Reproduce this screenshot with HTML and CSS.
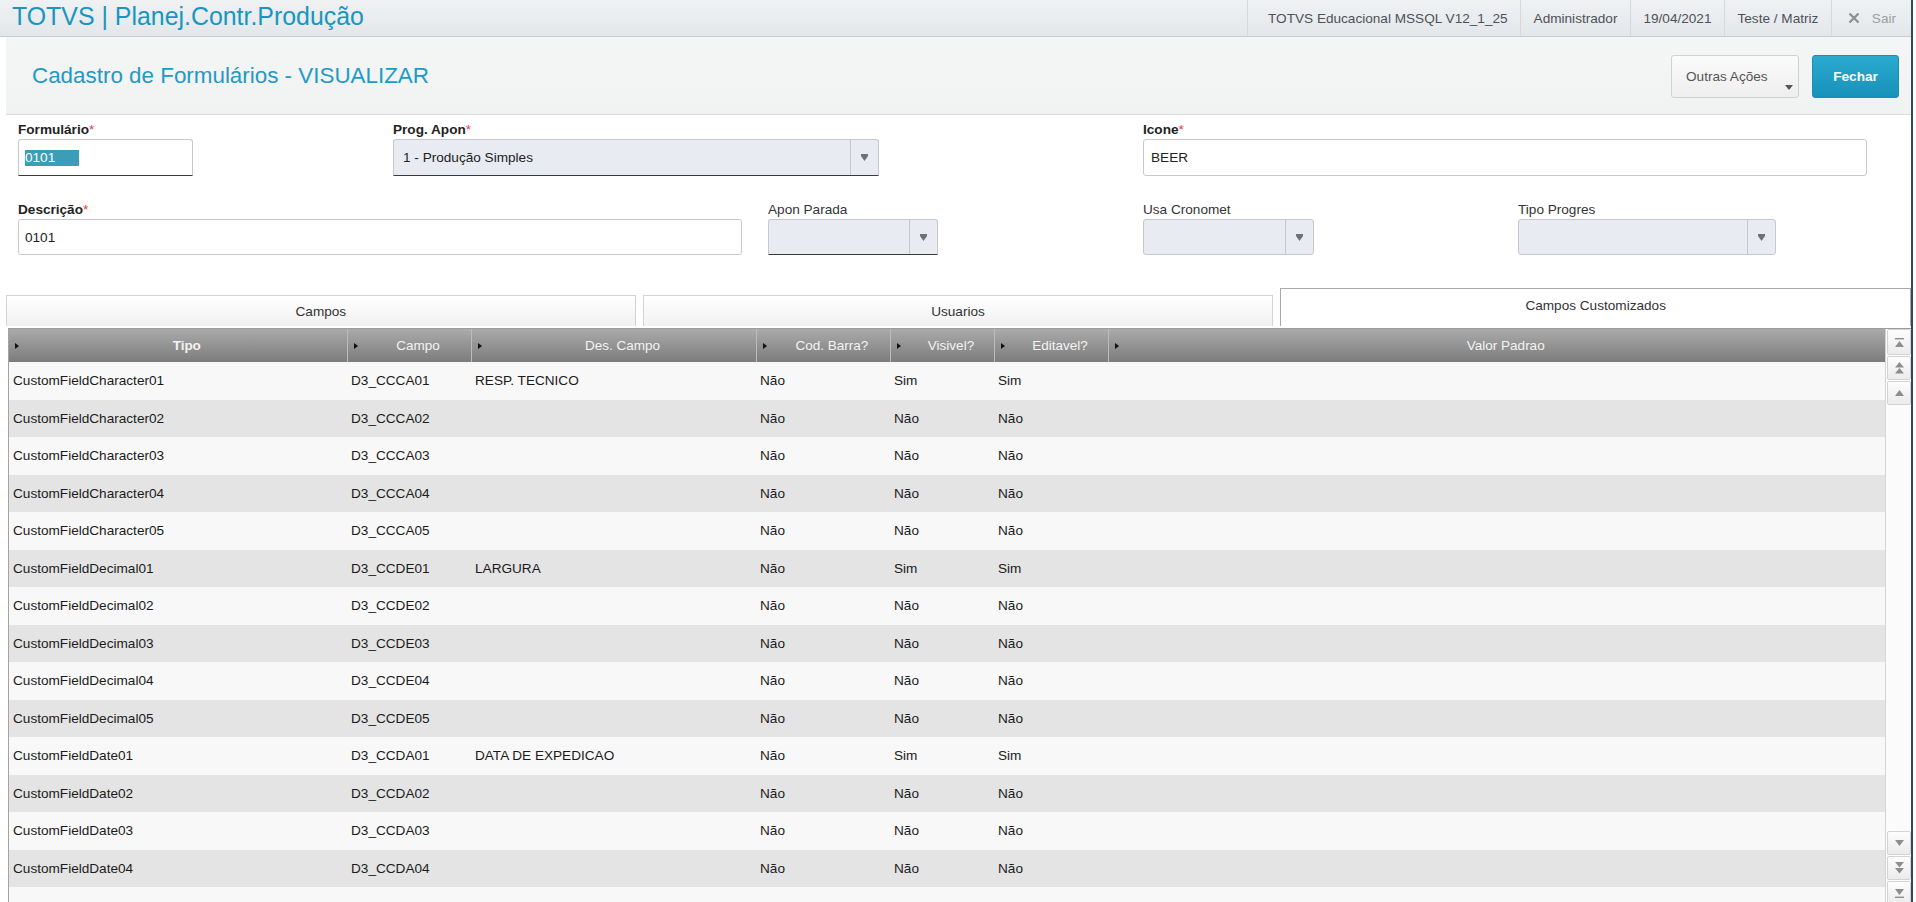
FILE: index.html
```html
<!DOCTYPE html>
<html lang="pt-BR">
<head>
<meta charset="utf-8">
<title>TOTVS | Planej.Contr.Produção</title>
<link rel="stylesheet" href="styles.css">
</head>
<body>
<div class="page">
  <div class="topbar">
    <div class="brand">TOTVS | Planej.Contr.Produção</div>
    <div class="topinfo">
      <span class="ti">TOTVS Educacional MSSQL V12_1_25</span>
      <span class="ti">Administrador</span>
      <span class="ti">19/04/2021</span>
      <span class="ti">Teste / Matriz</span>
      <span class="ti sair"><svg class="x-icon" width="12" height="12" viewBox="0 0 12 12"><path d="M1.5 1.5L10.5 10.5M10.5 1.5L1.5 10.5" stroke="#8a8d91" stroke-width="2.2" fill="none"/></svg>Sair</span>
    </div>
  </div>

  <div class="main">
    <div class="header">
      <h1 class="heading">Cadastro de Formulários - VISUALIZAR</h1>
      <div class="actions">
        <button class="btn btn-other">Outras Ações<svg class="btn-caret" width="8" height="5" viewBox="0 0 8 5"><polygon points="0,0 8,0 4,5" fill="#555"/></svg></button>
        <button class="btn btn-close">Fechar</button>
      </div>
    </div>

    <div class="form">
      <div class="field f-formulario">
        <label class="lbl req">Formulário<span class="ast">*</span></label>
        <div class="box dark-bottom"><span class="sel">0101</span></div>
      </div>
      <div class="field f-prog">
        <label class="lbl req">Prog. Apon<span class="ast">*</span></label>
        <div class="box select dark-bottom"><span class="val">1 - Produção Simples</span><span class="arrow"><svg width="7" height="7" viewBox="0 0 7 7"><polygon points="0,0 7,0 7,2 3.5,7 0,2" fill="#6e7277"/></svg></span></div>
      </div>
      <div class="field f-icone">
        <label class="lbl req">Icone<span class="ast">*</span></label>
        <div class="box"><span class="val">BEER</span></div>
      </div>

      <div class="field f-desc">
        <label class="lbl req">Descrição<span class="ast">*</span></label>
        <div class="box"><span class="val">0101</span></div>
      </div>
      <div class="field f-apon">
        <label class="lbl">Apon Parada</label>
        <div class="box select dark-bottom"><span class="val"></span><span class="arrow"><svg width="7" height="7" viewBox="0 0 7 7"><polygon points="0,0 7,0 7,2 3.5,7 0,2" fill="#6e7277"/></svg></span></div>
      </div>
      <div class="field f-usa">
        <label class="lbl">Usa Cronomet</label>
        <div class="box select"><span class="val"></span><span class="arrow"><svg width="7" height="7" viewBox="0 0 7 7"><polygon points="0,0 7,0 7,2 3.5,7 0,2" fill="#6e7277"/></svg></span></div>
      </div>
      <div class="field f-tipo">
        <label class="lbl">Tipo Progres</label>
        <div class="box select"><span class="val"></span><span class="arrow"><svg width="7" height="7" viewBox="0 0 7 7"><polygon points="0,0 7,0 7,2 3.5,7 0,2" fill="#6e7277"/></svg></span></div>
      </div>
    </div>

    <div class="tabs">
      <div class="tab t1">Campos</div>
      <div class="tab t2">Usuarios</div>
      <div class="tab t3 active">Campos Customizados</div>
    </div>

    <div class="grid">
      <div class="table-wrap">
        <table class="tbl">
          <colgroup>
            <col class="c1"><col class="c2"><col class="c3"><col class="c4"><col class="c5"><col class="c6"><col class="c7">
          </colgroup>
          <thead>
            <tr>
              <th class="sorted"><span class="tri"></span>Tipo</th>
              <th><span class="tri"></span>Campo</th>
              <th><span class="tri"></span>Des. Campo</th>
              <th><span class="tri"></span>Cod. Barra?</th>
              <th><span class="tri"></span>Visivel?</th>
              <th><span class="tri"></span>Editavel?</th>
              <th><span class="tri"></span>Valor Padrao</th>
            </tr>
          </thead>
          <tbody>
            <tr><td>CustomFieldCharacter01</td><td>D3_CCCA01</td><td>RESP. TECNICO</td><td>Não</td><td>Sim</td><td>Sim</td><td></td></tr>
            <tr><td>CustomFieldCharacter02</td><td>D3_CCCA02</td><td></td><td>Não</td><td>Não</td><td>Não</td><td></td></tr>
            <tr><td>CustomFieldCharacter03</td><td>D3_CCCA03</td><td></td><td>Não</td><td>Não</td><td>Não</td><td></td></tr>
            <tr><td>CustomFieldCharacter04</td><td>D3_CCCA04</td><td></td><td>Não</td><td>Não</td><td>Não</td><td></td></tr>
            <tr><td>CustomFieldCharacter05</td><td>D3_CCCA05</td><td></td><td>Não</td><td>Não</td><td>Não</td><td></td></tr>
            <tr><td>CustomFieldDecimal01</td><td>D3_CCDE01</td><td>LARGURA</td><td>Não</td><td>Sim</td><td>Sim</td><td></td></tr>
            <tr><td>CustomFieldDecimal02</td><td>D3_CCDE02</td><td></td><td>Não</td><td>Não</td><td>Não</td><td></td></tr>
            <tr><td>CustomFieldDecimal03</td><td>D3_CCDE03</td><td></td><td>Não</td><td>Não</td><td>Não</td><td></td></tr>
            <tr><td>CustomFieldDecimal04</td><td>D3_CCDE04</td><td></td><td>Não</td><td>Não</td><td>Não</td><td></td></tr>
            <tr><td>CustomFieldDecimal05</td><td>D3_CCDE05</td><td></td><td>Não</td><td>Não</td><td>Não</td><td></td></tr>
            <tr><td>CustomFieldDate01</td><td>D3_CCDA01</td><td>DATA DE EXPEDICAO</td><td>Não</td><td>Sim</td><td>Sim</td><td></td></tr>
            <tr><td>CustomFieldDate02</td><td>D3_CCDA02</td><td></td><td>Não</td><td>Não</td><td>Não</td><td></td></tr>
            <tr><td>CustomFieldDate03</td><td>D3_CCDA03</td><td></td><td>Não</td><td>Não</td><td>Não</td><td></td></tr>
            <tr><td>CustomFieldDate04</td><td>D3_CCDA04</td><td></td><td>Não</td><td>Não</td><td>Não</td><td></td></tr>
            <tr><td></td><td></td><td></td><td></td><td></td><td></td><td></td></tr>
          </tbody>
        </table>
      </div>
      <div class="scrollbar">
        <div class="sb-group">
          <div class="sb-btn b1"><svg width="9" height="9" viewBox="0 0 9 9"><rect x="0" y="0" width="9" height="1.4" fill="#8d8d8d"/><polygon points="4.5,3 9,9 0,9" fill="#8d8d8d"/></svg></div>
          <div class="sb-btn b2"><svg width="9" height="12" viewBox="0 0 9 12"><polygon points="4.5,0 9,5.5 0,5.5" fill="#8d8d8d"/><polygon points="4.5,6 9,11.5 0,11.5" fill="#8d8d8d"/></svg></div>
          <div class="sb-btn b3"><svg width="9" height="6" viewBox="0 0 9 6"><polygon points="4.5,0 9,6 0,6" fill="#8d8d8d"/></svg></div>
        </div>
        <div class="sb-group">
          <div class="sb-btn b3"><svg width="9" height="6" viewBox="0 0 9 6"><polygon points="0,0 9,0 4.5,6" fill="#8d8d8d"/></svg></div>
          <div class="sb-btn b2"><svg width="9" height="12" viewBox="0 0 9 12"><polygon points="0,0 9,0 4.5,5.5" fill="#8d8d8d"/><polygon points="0,6 9,6 4.5,11.5" fill="#8d8d8d"/></svg></div>
          <div class="sb-btn b1"><svg width="9" height="9" viewBox="0 0 9 9"><polygon points="0,0 9,0 4.5,6" fill="#8d8d8d"/><rect x="0" y="7.6" width="9" height="1.4" fill="#8d8d8d"/></svg></div>
        </div>
      </div>
    </div>
  </div>
</div>
</body>
</html>
```

FILE: styles.css
```css
html, body {
  margin: 0;
  padding: 0;
  background: #ffffff;
}

body {
  font-family: "Liberation Sans", Arial, sans-serif;
  font-size: 13.6px;
  color: #222;
  width: 1916px;
  height: 902px;
  overflow: hidden;
}

.page {
  width: 1911px;
  height: 902px;
  border-right: 2px solid #2b4b5d;
  overflow: hidden;
}

/* ---------- top bar ---------- */
.topbar {
  height: 36px;
  border-bottom: 1px solid #c8cbcf;
  background: linear-gradient(#eff1f3, #e4e7ea);
  display: flex;
  justify-content: space-between;
  align-items: stretch;
}

.brand {
  padding-left: 12px;
  font-size: 24.9px;
  line-height: 33px;
  color: #1896c1;
  white-space: nowrap;
}

.topinfo {
  display: flex;
  align-items: stretch;
  padding-right: 15px;
}

.ti {
  display: flex;
  align-items: center;
  padding: 0 12.5px;
  border-left: 1px solid #d6d9dc;
  color: #4d5257;
  white-space: nowrap;
}

.ti:first-child {
  padding-left: 20px;
}

.sair {
  color: #9b9ea2;
  gap: 12px;
  padding-left: 16px;
  padding-right: 0;
}

/* ---------- main ---------- */
.main {
  padding-left: 6px;
}

.header {
  height: 77px;
  border-bottom: 1px solid #dadcdd;
  background: linear-gradient(#f4f5f5, #f1f2f2);
  display: flex;
  align-items: center;
  justify-content: space-between;
  padding: 0 12px 0 26px;
}

.heading {
  margin: 0;
  font-weight: normal;
  font-size: 22.4px;
  color: #1f9ac6;
  white-space: nowrap;
}

.actions {
  display: flex;
  gap: 13px;
  margin-top: 1px;
}

.btn {
  height: 43px;
  font-family: "Liberation Sans", Arial, sans-serif;
  font-size: 13.6px;
  border-radius: 3px;
  cursor: pointer;
  white-space: nowrap;
}

.btn-other {
  position: relative;
  box-sizing: border-box;
  width: 128px;
  padding: 0 0 0 14px;
  text-align: left;
  color: #555;
  background: linear-gradient(#fbfbfb, #eeeeee);
  border: 1px solid #cfd1d3;
}

.btn-caret {
  position: absolute;
  right: 5px;
  bottom: 7px;
}

.btn-close {
  width: 87px;
  color: #ffffff;
  font-weight: bold;
  background: linear-gradient(#2ba9cf, #1792ba);
  border: 1px solid #1a8db3;
}

/* ---------- form ---------- */
.form {
  display: grid;
  grid-template-columns: repeat(5, 375px);
  row-gap: 26px;
  padding: 7px 0 0 12px;
}

.lbl {
  display: block;
  height: 16px;
  line-height: 16px;
  margin-bottom: 1px;
  color: #333;
  white-space: nowrap;
}

.lbl.req {
  font-weight: bold;
  color: #222;
}

.ast {
  color: #e23b3b;
  font-weight: normal;
}

.box {
  box-sizing: border-box;
  height: 37px;
  border: 1px solid #c8c9cb;
  border-radius: 3px;
  background: #ffffff;
  display: flex;
  align-items: center;
  padding-left: 6px;
  color: #222;
}

.f-desc .box,
.f-apon .box,
.f-usa .box,
.f-tipo .box {
  height: 36px;
}

.box .val {
  flex: 1;
  white-space: nowrap;
}

.f-icone .box .val {
  padding-left: 1px;
}

.f-prog .box .val {
  padding-left: 3px;
}

.dark-bottom {
  border-bottom: 1px solid #3a3a3a;
  border-bottom-left-radius: 0;
  border-bottom-right-radius: 0;
}

.sel {
  background: #3b9db6;
  color: #ffffff;
  line-height: 16px;
  padding-right: 24px;
}

.select {
  background: #e8ebf2;
  border-color: #c5c8cd;
  padding-right: 0;
}

.select.dark-bottom {
  border-bottom-color: #3a3a3a;
}

.arrow {
  align-self: stretch;
  width: 27px;
  border-left: 1px solid #c5c8cd;
  display: flex;
  align-items: center;
  justify-content: center;
}

.f-formulario { grid-column: 1; width: 175px; }
.f-prog { grid-column: 2 / 4; width: 486px; }
.f-icone { grid-column: 4 / 6; width: 724px; }
.f-desc { grid-column: 1 / 3; width: 724px; }
.f-apon { grid-column: 3; width: 170px; }
.f-usa { grid-column: 4; width: 171px; }
.f-tipo { grid-column: 5; width: 258px; }

/* ---------- tabs ---------- */
.tabs {
  display: flex;
  align-items: flex-end;
  gap: 7.5px;
  height: 38px;
  margin-top: 33px;
}

.tab {
  box-sizing: border-box;
  width: 630px;
  height: 31px;
  display: flex;
  align-items: center;
  justify-content: center;
  color: #333;
  background: linear-gradient(#ffffff, #f1f1f1);
  border: 1px solid #d3d3d3;
  border-bottom: none;
}

.tab.t3 {
  width: 631px;
}

.tab.active {
  height: 38px;
  background: #ffffff;
  border: 1px solid #a9a9a9;
  border-bottom: none;
  padding-bottom: 5px;
}

/* ---------- grid ---------- */
.grid {
  display: flex;
  height: 576px;
  margin-top: 2px;
  margin-left: 2px;
  border-top: 1px solid #9c9c9c;
}

.table-wrap {
  width: 1877px;
  overflow: hidden;
  border-left: 1px solid #a3a3a3;
}

.tbl {
  width: 1876px;
  table-layout: fixed;
  border-collapse: collapse;
  border-spacing: 0;
}

.c1 { width: 338px; }
.c2 { width: 124px; }
.c3 { width: 285px; }
.c4 { width: 134px; }
.c5 { width: 104px; }
.c6 { width: 114px; }
.c7 { width: 777px; }

.tbl th {
  position: relative;
  height: 33px;
  padding: 0 0 0 18px;
  font-weight: normal;
  font-size: 13.5px;
  color: #f3f3f3;
  text-align: center;
  white-space: nowrap;
  background: linear-gradient(#aaaaaa, #7c7c7c);
  border-right: 1px solid #bcbcbc;
}

.tbl th:last-child {
  border-right: none;
}

.tbl th.sorted {
  font-weight: bold;
}

.tri {
  position: absolute;
  left: 6px;
  top: 50%;
  margin-top: -3px;
  width: 0;
  height: 0;
  border-top: 3.5px solid transparent;
  border-bottom: 3.5px solid transparent;
  border-left: 4px solid #111;
}

.tbl td {
  height: 37.5px;
  padding: 0 0 0 4px;
  white-space: nowrap;
  overflow: hidden;
  color: #1b1b1b;
}

.tbl tbody tr:nth-child(odd) td {
  background: #f8f8f8;
}

.tbl tbody tr:nth-child(even) td {
  background: #e4e4e4;
}

/* ---------- scrollbar ---------- */
.scrollbar {
  box-sizing: border-box;
  width: 26px;
  display: flex;
  flex-direction: column;
  justify-content: space-between;
  background: #fbfbfb;
  border-left: 1px solid #d5d5d5;
  padding-left: 1px;
}

.sb-group {
  display: flex;
  flex-direction: column;
  gap: 1px;
}

.sb-btn {
  box-sizing: border-box;
  height: 24px;
  display: flex;
  align-items: center;
  justify-content: center;
  background: linear-gradient(#fdfdfd, #ebebeb);
  border: 1px solid #d3d3d3;
  border-radius: 2px;
}

.sb-group:first-child .sb-btn.b1 {
  height: 26px;
}
```
